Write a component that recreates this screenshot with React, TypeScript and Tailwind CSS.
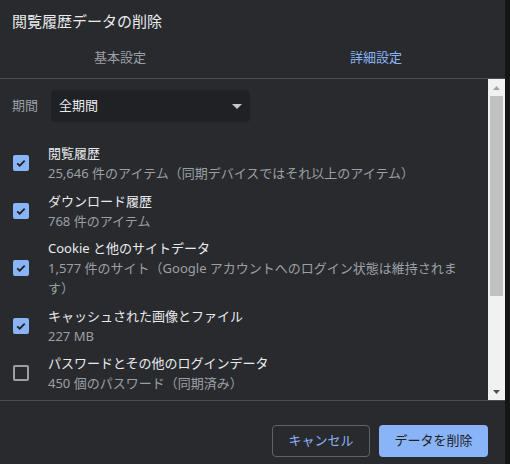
import React from "react";

const items = [
  { title: "閲覧履歴", sub: ["25,646 件のアイテム（同期デバイスではそれ以上のアイテム）"], checked: true },
  { title: "ダウンロード履歴", sub: ["768 件のアイテム"], checked: true },
  {
    title: "Cookie と他のサイトデータ",
    sub: ["1,577 件のサイト（Google アカウントへのログイン状態は維持されま", "す）"],
    checked: true,
  },
  { title: "キャッシュされた画像とファイル", sub: ["227 MB"], checked: true },
  { title: "パスワードとその他のログインデータ", sub: ["450 個のパスワード（同期済み）"], checked: false },
];

export default function App() {
  return (
    <div className="w-[510px] h-[464px] flex bg-[#151515] font-['Noto_Sans','Noto_Sans_CJK_JP',sans-serif] overflow-hidden">
      <div className="w-[505px] h-full flex flex-col bg-[#292a2d]">
        {/* header */}
        <div className="pl-3 pt-[11px] h-[31px] text-[15px] leading-[20px] text-[#e8eaed]">
          閲覧履歴データの削除
        </div>
        <div className="flex h-[47px] items-center text-[13px] leading-[20px] pt-[4px]">
          <div className="w-[240px] text-center text-[#9aa0a6]">基本設定</div>
          <div className="w-[256px] ml-[8px] text-center text-[#8ab4f8]">詳細設定</div>
        </div>

        {/* scroll area */}
        <div className="flex h-[323px] border-t border-b border-[#4a4c50]">
          <div className="flex-1 pl-3 pt-[11px]">
            <div className="flex items-center gap-[13px]">
              <span className="text-[13px] text-[#9aa0a6]">期間</span>
              <div className="w-[199px] h-[32px] rounded bg-[#202124] flex items-center justify-between pl-2 pr-[8px]">
                <span className="text-[13px] text-[#e8eaed]">全期間</span>
                <svg width="10" height="5" viewBox="0 0 10 5">
                  <path d="M0 0h10L5 5z" fill="#c4c7cb" />
                </svg>
              </div>
            </div>

            <div className="mt-[21px] flex flex-col gap-[7.5px]">
              {items.map((it, i) => (
                <div key={i} className="flex items-center">
                  <Check checked={it.checked} />
                  <div className="ml-[19px] text-[13px] leading-[20px] whitespace-nowrap">
                    <div className="text-[#e8eaed]">{it.title}</div>
                    {it.sub.map((s, j) => (
                      <div key={j} className="text-[#9aa0a6]">{s}</div>
                    ))}
                  </div>
                </div>
              ))}
            </div>
          </div>

          {/* scrollbar */}
          <div className="w-[17px] bg-[#f1f1f1] flex flex-col">
            <div className="h-[17px] flex items-center justify-center">
              <svg width="7" height="4" viewBox="0 0 7 4">
                <path d="M0 4h7L3.5 0z" fill="#a3a3a3" />
              </svg>
            </div>
            <div className="mx-[2px] h-[200px] bg-[#c1c1c1]" />
            <div className="flex-1" />
            <div className="h-[17px] flex items-center justify-center">
              <svg width="7" height="4" viewBox="0 0 7 4">
                <path d="M0 0h7L3.5 4z" fill="#505050" />
              </svg>
            </div>
          </div>
        </div>

        {/* footer */}
        <div className="flex justify-end gap-[9px] pr-[17px] pt-[24px]">
          <button className="w-[98px] h-[32px] rounded border border-[#5f6368] text-[13px] text-[#8ab4f8]">
            キャンセル
          </button>
          <button className="w-[109px] h-[32px] rounded bg-[#8ab4f8] text-[13px] text-[#202124]">
            データを削除
          </button>
        </div>
      </div>
    </div>
  );
}

function Check({ checked }: { checked: boolean }) {
  if (!checked) {
    return <div className="ml-[1px] w-[16px] h-[16px] rounded-[2px] border-2 border-[#9aa0a6]" />;
  }
  return (
    <div className="ml-[1px] w-[16px] h-[16px] rounded-[2px] bg-[#8ab4f8] flex items-center justify-center">
      <svg width="12" height="12" viewBox="0 0 12 12">
        <path d="M2.2 6.3l2.5 2.4 5-5" stroke="#202124" strokeWidth="1.8" fill="none" />
      </svg>
    </div>
  );
}
